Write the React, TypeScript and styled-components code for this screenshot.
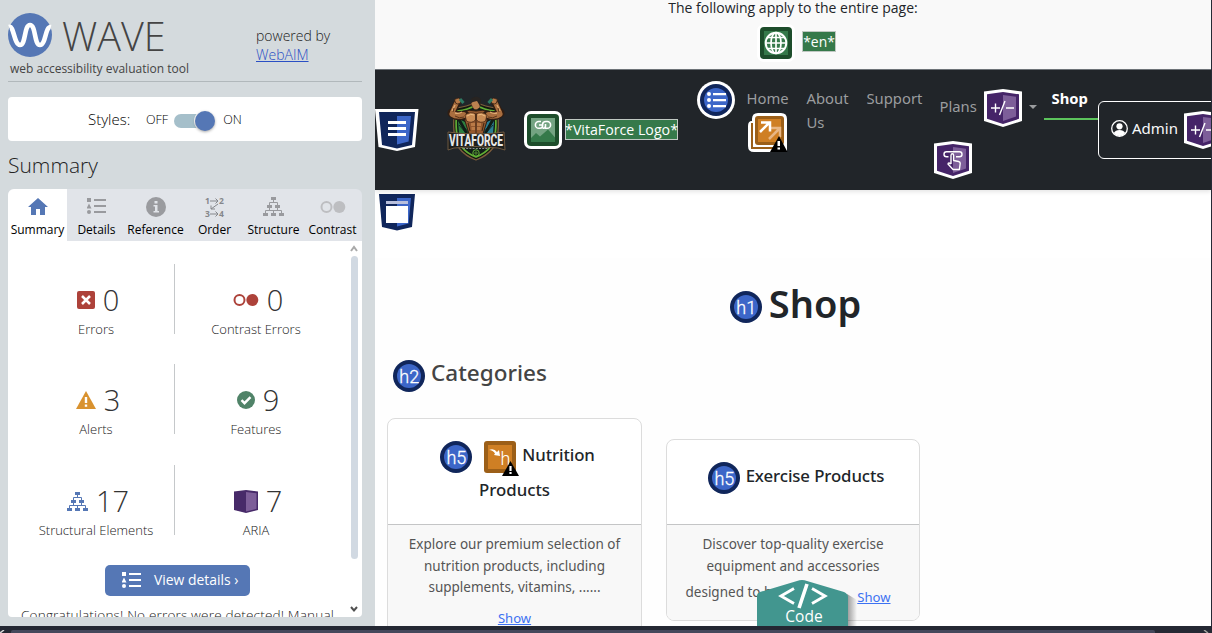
import React from 'react';
import styled, { createGlobalStyle } from 'styled-components';

const Global = createGlobalStyle`
  * { box-sizing: border-box; }
  html, body { margin: 0; padding: 0; overflow: hidden; background: #fff; }
  body { font-family: "Open Sans", "Noto Sans", sans-serif; }
  svg { display: block; flex: none; }
  h1, h2, h5, p { margin: 0; }
`;

const Shell = styled.div`
  width: 1212px; height: 633px; overflow: hidden;
  display: flex; flex-direction: column;
`;
const Workspace = styled.div`display: flex; height: 626px; overflow: hidden;`;
const BottomEdge = styled.div`
  height: 7px; background: #262833; border-top: 4px solid #242833;
  display: flex; align-items: stretch;
`;
const BottomThumb = styled.div`width: 1144px; margin: 0 48px 0 6px; background: #45485b; border-radius: 2px 2px 0 0;`;

/* ---------- sidebar ---------- */
const Sidebar = styled.aside`
  width: 375px; height: 626px; padding: 0 13px 9px 8px; background: #d4dadd; flex: none;
  display: flex; flex-direction: column;
`;
const Brand = styled.header`
  display: flex; justify-content: space-between; height: 82px; border-bottom: 1px solid #b1b8bb; flex: none;
`;
const BrandLeft = styled.div`padding-top: 13px;`;
const BrandRow = styled.div`display: flex; height: 45px; gap: 10px;`;
const Wordmark = styled.div`
  font-weight: 300; font-size: 39.5px; line-height: 46px; color: #444;
`;
const Tagline = styled.div`
  font-size: 12px; line-height: 16px; padding: 3px 0 0 2px; color: #444; white-space: nowrap;
`;
const Powered = styled.div`
  width: 106px; padding-top: 26px; font-size: 14px; line-height: 19px; font-weight: 300; color: #222;
  a { color: #2a4fc4; text-decoration: underline; }
`;
const StylesBox = styled.div`
  margin-top: 15px; height: 44px; background: #fff; border-radius: 4px; flex: none;
  display: flex; align-items: center; padding-left: 80px; font-size: 15px; color: #111;
`;
const StylesLabel = styled.span`width: 58px; font-weight: 300; color: #000;`;
const SwitchText = styled.span`font-size: 12.5px; font-weight: 300; color: #000;`;
const Toggle = styled.span`
  display: flex; justify-content: flex-end; align-items: center; margin: 4px 8px 0 6px;
  width: 41px; height: 14px; border-radius: 7px; background: #a5bfca;
`;
const Knob = styled.span`
  width: 20px; height: 20px; border-radius: 50%; background: #5577b5; box-shadow: 0 1px 3px rgba(0,0,0,.35), 0 0 0 1px #fff; flex: none;
`;
const SideTitle = styled.h2`
  font-weight: 300; font-size: 21px; line-height: 28px; margin-top: 10px; color: #222;
`;
const Tabs = styled.nav`
  margin-top: 10px; height: 52px; display: flex; background: #e1e4e9; border-radius: 6px 6px 0 0; overflow: hidden; flex: none;
`;
const Tab = styled.div<{ $on?: boolean }>`
  width: 59px; height: 52px; display: flex; flex-direction: column; align-items: center;
  background: ${p => (p.$on ? '#fff' : 'transparent')};
  font-size: 12px; line-height: 16px; color: #000; white-space: nowrap;
`;
const TabIcon = styled.span`height: 33px; display: flex; align-items: center; padding-top: 2px; flex: none;`;
const Panel = styled.section`
  flex: 1; background: #fff; border-radius: 0 0 4px 4px; display: flex; overflow: hidden; min-height: 0;
`;
const PanelBody = styled.div`width: 340px; overflow: hidden; padding-top: 23px; display: flex; flex-direction: column;`;
const StatRow = styled.div<{ $h: number }>`display: flex; height: ${p => p.$h}px; flex: none;`;
const Stat = styled.div<{ $w: number; $line?: boolean }>`
  width: ${p => p.$w}px; height: 70px; padding-left: ${p => (p.$line ? 10 : 0)}px;
  border-right: ${p => (p.$line ? '1px solid #c5c8ca' : '0')};
  display: flex; flex-direction: column; align-items: center;
`;
const StatTop = styled.div`display: flex; align-items: center; gap: 8px; height: 57px; padding: 15px 0 0 4px; flex: none;`;
const Num = styled.span`font-size: 29px; line-height: 36px; font-weight: 300; color: #333;`;
const StatLabel = styled.div`font-size: 13px; line-height: 17px; font-weight: 300; color: #222; white-space: nowrap;`;
const ViewDetails = styled.div`
  margin: 0 0 0 97px; width: 145px; height: 31px; background: #5577b5; border-radius: 5px; color: #fff; flex: none;
  display: flex; align-items: center; gap: 13px; padding-left: 17px; font-size: 13.9px; line-height: 18px; white-space: nowrap;
  span { padding-bottom: 2px; }
`;
const Congrats = styled.p`
  margin: 9px 0 0 13px; font-size: 13.6px; line-height: 20px; font-weight: 300; color: #222; white-space: nowrap; letter-spacing: 0.15px;
`;
const Scroll = styled.div`
  width: 14px; display: flex; flex-direction: column; align-items: center; padding: 4px 2px 4px 0;
`;
const Thumb = styled.div`width: 7px; height: 303px; border-radius: 4px; background: #d1d9e2; margin: 3px 0 46px; flex: none;`;

/* ---------- evaluated page ---------- */
const Page = styled.main`
  position: relative; flex: 1; min-width: 0; overflow: hidden; background: #fff; border-right: 1px solid #262a36;
  display: flex; flex-direction: column;
`;
const Notice = styled.div`
  height: 70px; background: #f9f9f9; border-bottom: 1px solid #70757a; flex: none;
  display: flex; flex-direction: column; align-items: center; color: #212529;
`;
const NoticeText = styled.div`font-size: 14px; line-height: 16px; white-space: nowrap;`;
const NoticeRow = styled.div`display: flex; align-items: flex-start; gap: 7px; margin-top: 8px; padding-left: 7px;`;
const AltText = styled.span<{ $size: number; $w: number; $top?: number }>`
  display: block; width: ${p => p.$w}px; height: 21px; margin-top: ${p => p.$top || 0}px; background: #35794a; border: 1px solid #c0c8c2; color: #fff;
  font-size: ${p => p.$size}px; line-height: 19px; display: flex; justify-content: center; white-space: nowrap;
`;
const Nav = styled.header`
  height: 120px; background: #212529; display: flex; flex: none; box-shadow: 0 2px 4px rgba(0,0,0,.1); overflow: hidden; z-index: 1;
`;
const NavItem = styled.div<{ $w: number; $top: number }>`
  width: ${p => p.$w}px; padding-top: ${p => p.$top}px; flex: none;
`;
const NavText = styled.span<{ $bold?: boolean }>`
  display: block; font-family: "Noto Sans", sans-serif; font-size: 14.8px; line-height: 24px; white-space: nowrap; padding-left: 0.5px;
  color: ${p => (p.$bold ? '#fff' : '#9b9d9f')}; font-weight: ${p => (p.$bold ? 700 : 400)};
`;
const UnderLink = styled.div`padding: 3px 0 0 2px;`;
const PlansRow = styled.div`display: flex; align-items: center; gap: 7px; height: 38px;`;
const PlansText = styled.div`padding: 0 0 4px 5px;`;
const PlansBelow = styled.div`padding-top: 14px;`;
const Caret = styled.span`
  border: 4px solid transparent; border-top-color: #9b9d9f; border-bottom: 0; margin-bottom: 3px;
`;
const ShopLink = styled.div`height: 34px; border-bottom: 2px solid #5cc45c; padding-left: 7px;`;
const AdminBox = styled.div`
  margin-top: 31px; height: 58px; width: 130px; flex: none; border: 1px solid #fff; border-radius: 6px;
  display: flex; align-items: center; padding: 0 0 3px 12px; gap: 4px;
  color: #f8f9fa; font: 15px "Noto Sans", sans-serif;
`;
const AdminName = styled.span`padding-bottom: 1px; margin-right: 2px;`;
const AdminMark = styled.div`padding-top: 3px;`;
const RegionMark = styled.div`height: 68px; padding: 1px 0 0 0; flex: none; background: #fff;`;
const Content = styled.div`height: 368px; background: #fefefe; flex: none; padding: 0 12px;`;
const ShopTitle = styled.h1`
  display: flex; align-items: center; justify-content: center; gap: 7px; height: 94px; padding: 4px 0 0 5px;
  font: 600 38px/46px "Noto Sans", sans-serif; color: #212529;
  span { padding-bottom: 8px; }
`;
const CatTitle = styled.h2`
  display: flex; align-items: center; gap: 6px; height: 46px; padding: 2px 0 0 6px;
  font: 500 22.5px/30px "Noto Sans", sans-serif; color: #444;
  span { padding-bottom: 6px; }
`;
const Cards = styled.div`display: flex; align-items: flex-start; gap: 24px; padding-top: 20px;`;
const Card = styled.article<{ $w: number; $h: number; $top: number }>`
  width: ${p => p.$w}px; height: ${p => p.$h}px; margin-top: ${p => p.$top}px; background: #fff; border: 1px solid #dcdcdc; border-radius: 8px;
  display: flex; flex-direction: column; overflow: hidden; flex: none;
`;
const CardHead = styled.div<{ $h: number }>`
  height: ${p => p.$h}px; flex: none; border-bottom: 1px solid #c4c5c6; padding-top: 20px;
  display: flex; flex-direction: column; align-items: center;
`;
const CardTitle = styled.h5`
  display: flex; align-items: center; gap: 6px; height: 36px; padding-left: 6px;
  font: 500 16.8px/30px "Noto Sans", sans-serif; letter-spacing: -0.1px; color: #212529; white-space: nowrap;
  span { padding-bottom: 5px; }
`;
const CardMarks = styled.div`display: flex; gap: 12px;`;
const CardTitleRest = styled.h5`font: 500 16.8px/30px "Noto Sans", sans-serif; color: #212529;`;
const CardText = styled.div`
  background: #f8f8f8; flex: 1; display: flex; flex-direction: column; align-items: center; padding-top: 9px;
  font: 13.5px/21.5px "Noto Sans", sans-serif; color: #555; white-space: nowrap;
`;
const TextLine = styled.span`display: block;`;
const ShowLink = styled.a<{ $top: number }>`
  color: #3d72f2; text-decoration: underline; font-size: 13.1px; padding-top: ${p => p.$top}px;
`;
const LastLine = styled.div`display: flex; align-items: flex-start; width: 205px; justify-content: space-between; margin: 5px 10px 0 0;`;
const CodeTab = styled.div`position: absolute; left: 382px; top: 580px; width: 110px; height: 46px; z-index: 3;`;
const CodeLabel = styled.div`
  position: absolute; left: 1px; top: 26px; width: 92px; text-align: center; color: #fff; font-size: 15.5px; line-height: 20px;
`;

/* ---------- drawings ---------- */
const WaveLogo = () => (
  <svg width="44" height="44" viewBox="0 0 44 44">
    <circle cx="22" cy="22" r="22" fill="#5577b5" />
    <path d="M1 14C6 12 6 32 12 32C18 32 16 12 22 12C28 12 26 32 32 32C38 32 37 13 43 14" fill="none" stroke="#fff" strokeWidth="4.600" />
  </svg>
);
const ListIcon = ({ c }: { c: string }) => (
  <svg width="19" height="17" viewBox="0 0 19 17" fill={c}>
    <path d="M0 0h4v4H0zM2 5.500l2.500 5H-.5zM7 1h12v2H7zM7 7h12v2H7zM7 13h12v2H7z" />
    <circle cx="2" cy="14" r="2" />
  </svg>
);
const Tree = ({ c }: { c: string }) => (
  <svg width="21" height="19" viewBox="0 0 21 19" fill={c}>
    <path d="M8 0h5v3H8zM4 8h5v3H4zM12 8h5v3h-5zM0 16h5v3H0zM8 16h5v3H8zM16 16h5v3h-5z" />
    <path d="M10.500 3v3M6.500 9V5.500h8V9M6.500 11v3M14.500 11v3M2.500 17v-3.500h16V17M10.500 14v3" stroke={c} fill="none" />
  </svg>
);
const Pair = ({ c }: { c: string }) => (
  <svg width="26" height="14" viewBox="0 0 26 14">
    <circle cx="6.500" cy="7" r="5" fill="none" stroke={c} strokeWidth="2" />
    <circle cx="19.300" cy="7" r="6" fill={c} />
  </svg>
);
const House = () => (
  <svg width="20" height="18" viewBox="0 0 20 18"><path d="M10 0L20 9H17V17H12V11H8V17H3V9H0Z" fill="#5577b5" /></svg>
);
const Info = () => (
  <svg width="20" height="20" viewBox="0 0 20 20">
    <circle cx="10" cy="10" r="10" fill="#9a9b9f" />
    <path d="M8.500 4h3v2.600h-3zM7.500 8h4v6h1.500v1.600H7.500V14H9V9.500H7.500z" fill="#e1e4e9" />
  </svg>
);
const OrderIcon = () => (
  <svg width="22" height="24" viewBox="-1 -2 22 24" fill="#85878b" fontFamily="Open Sans, sans-serif" fontSize="8.500" fontWeight="700">
    <text x="0" y="7">1</text><text x="14" y="7">2</text><text x="0" y="20">3</text><text x="14" y="20">4</text>
    <path d="M5 4h8M10.500 1.500L13 4l-2.500 2.500M5 17h8M10.500 14.500L13 17l-2.500 2.500M13 7L6 12M6 8.500V12h4" fill="none" stroke="#85878b" />
  </svg>
);
const ErrorIcon = () => (
  <svg width="18" height="18" viewBox="0 0 18 18"><rect width="18" height="18" rx="2" fill="#ad423a" /><path d="M5 5l8 8M13 5l-8 8" stroke="#fff" strokeWidth="2.500" /></svg>
);
const AlertIcon = () => (
  <svg width="20" height="18" viewBox="0 0 20 18"><path d="M10 0l10 18H0z" fill="#d9922f" /><path d="M8.800 6h2.400v6H8.800zM8.800 13.500h2.400v2.200H8.800z" fill="#fff" /></svg>
);
const CheckIcon = () => (
  <svg width="18" height="18" viewBox="0 0 18 18"><circle cx="9" cy="9" r="9" fill="#508368" /><path d="M4.500 9.200l3 3 6-6" fill="none" stroke="#fff" strokeWidth="2.400" /></svg>
);
const AriaIcon = () => (
  <svg width="24" height="23" viewBox="0 0 24 23"><path d="M0 1.500L12 0l12 1.500V20l-12 3L0 20z" fill="#472a69" /><path d="M12 2l10.500 1.200V18.800L12 21.400z" fill="#7d5e99" /></svg>
);
const Chevron = ({ up }: { up?: boolean }) => (
  <svg width="8" height="8" viewBox="0 0 8 8"><path d={up ? 'M1 6l3-4 3 4' : 'M1 2l3 3.500L7 2'} fill="none" stroke={up ? '#a9a9a9' : '#505050'} strokeWidth="2" /></svg>
);
const Heading = ({ n }: { n: number }) => (
  <svg width="32" height="32" viewBox="0 0 32 32">
    <circle cx="16" cy="16" r="16" fill="#10265b" /><circle cx="16" cy="16" r="12" fill="#3c66c8" />
    <text x="16.300" y="23" textAnchor="middle" fontFamily="Roboto, sans-serif" fontSize="18" fontWeight="300" fill="#fff" stroke="#fff" strokeWidth=".3">{`h${n}`}</text>
  </svg>
);
const Globe = () => (
  <svg width="38" height="38" viewBox="0 0 38 38">
    <rect width="38" height="38" rx="7" fill="#fff" /><rect x="3" y="3" width="32" height="32" rx="4" fill="#1d4d2b" /><rect x="7" y="7" width="24" height="24" fill="#35794a" />
    <g fill="none" stroke="#fff" strokeWidth="1.700"><circle cx="19" cy="19" r="10.300" strokeWidth="2" /><ellipse cx="19" cy="19" rx="5" ry="10.300" /><path d="M19 9v20M9 19h20M11 13.500h16M11 24.500h16" /></g>
  </svg>
);
const ImageIcon = () => (
  <svg width="38" height="38" viewBox="0 0 38 38">
    <rect width="38" height="38" rx="7" fill="#fff" /><rect x="3" y="3" width="32" height="32" rx="4" fill="#1d4d2b" /><rect x="7" y="7" width="24" height="24" fill="#74a382" />
    <path d="M7 27l5-5 4 3.500 8-7 7 8V31H7z" fill="#35794a" />
    <path d="M17 10.500h-2.200a3.300 3.300 0 0 0 0 6.800H16q2.600 0 2.600-2.500v-1.500M21 17.300h2.200a3.300 3.300 0 0 0 0-6.800H22q-3.400 0-3.400 2.800M15 14q0 0 3.600 0M21.500 13v2q0 2.300-2.900 2.300" fill="none" stroke="#fff" strokeWidth="1.600" />
  </svg>
);
const Landmark = ({ nav }: { nav?: boolean }) => (
  <svg width="44" height="42" viewBox="0 0 44 42">
    <path d="M0 0h43.500l-3.500 38L22 42L3.500 38z" fill="#fff" />
    <path d="M4 3h36l-3 33-15 3.500L7 36z" fill="#10265b" /><path d="M22 7h14l-2.400 25.500L22 35.500z" fill="#3c66c8" />
    {nav ? <path d="M13 12h18v3H13zM13 18h18v3H13zM13 24h18v3H13z" fill="#fff" /> : <><path d="M11 10h22v3H11z" fill="#b8bfdc" /><path d="M11 15h22v17H11z" fill="#fff" /></>}
  </svg>
);
const ListMark = () => (
  <svg width="38" height="38" viewBox="0 0 38 38">
    <circle cx="19" cy="19" r="19" fill="#fff" /><circle cx="19" cy="19" r="16" fill="#10265b" /><circle cx="19" cy="19" r="12" fill="#3c66c8" />
    <g fill="#fff"><circle cx="12" cy="13" r="2" /><circle cx="12" cy="19" r="2" /><circle cx="12" cy="25" r="2" /><path d="M16 12h13v2.200H16zM16 18h13v2.200H16zM16 24h13v2.200H16z" /></g>
  </svg>
);
const Redundant = () => (
  <svg width="40" height="40" viewBox="0 0 40 40">
    <path d="M10 0h23q6 0 6 6v33H6q-6 0-6-6V13q0-5 4-5V6q0-6 6-6z" fill="#fff" />
    <path d="M4 10v25h24" fill="none" stroke="#9c5f18" strokeWidth="2" />
    <rect x="7" y="3" width="29" height="29" rx="3" fill="#9c5f18" /><rect x="10" y="6" width="23" height="23" fill="#cf7f24" />
    <path d="M21 26l11-11M23 15h9v9" stroke="#e8b684" strokeWidth="2.500" fill="none" />
    <path d="M12 19l10-10M13 9.500h9v9" stroke="#fff" strokeWidth="2.500" fill="none" />
    <path d="M31 23l8.500 16H22z" fill="#000" /><path d="M29.500 28h2.500v5h-2.500zM29.500 34.500h2.500v2h-2.500z" fill="#fff" />
  </svg>
);
const SkippedHeading = () => (
  <svg width="32" height="32" viewBox="0 0 32 32" overflow="visible">
    <rect width="32" height="32" rx="3" fill="#9c5f18" /><rect x="4" y="4" width="24" height="24" fill="#cf7f24" />
    <path d="M5 9q5-2 8 2l2-2 1 6-6-1 1-1.500Q9 9 5 9z" fill="#fff" />
    <text x="16.500" y="23.500" fontFamily="Roboto, sans-serif" fontSize="18" fontWeight="300" fill="#fff">h</text>
    <path d="M26.500 20L35 35H18z" fill="#000" /><path d="M25.400 25h2.200v5h-2.200zM25.400 31h2.200v2h-2.200z" fill="#fff" />
  </svg>
);
const AriaMark = ({ tab }: { tab?: boolean }) => (
  <svg width="38" height="38" viewBox="0 0 38 38">
    <path d="M0 2.500L19 0l19 2.500V32L19 38L0 32z" fill="#fff" /><path d="M3 5.300L19 3l16 2.300v24.500L19 35L3 29.800z" fill="#452468" /><path d="M19 6l13 1.700v19.800L19 32z" fill="#7d5e99" />
    {tab
      ? <g fill="none" stroke="#fff" strokeWidth="1.400" strokeLinejoin="round"><path d="M14.500 15.800h-2a2.500 2.500 0 0 1 0-5h13a2.500 2.500 0 0 1 0 5H22" /><path d="M17 23V14.500q0-1.700 1.300-1.700t1.300 1.700V19.500l5 1q1.800.4 1.600 2l-.8 6h-6.400l-5-5.500q.2-2 3 0" /></g>
      : <path d="M7 19h9M11.500 14.500v9M21 12l-5.500 14M22 19h8" fill="none" stroke="#fff" strokeWidth="1.400" />}
  </svg>
);
const UserIcon = () => (
  <svg width="17" height="17" viewBox="0 0 17 17"><circle cx="8.500" cy="8.500" r="7.800" fill="none" stroke="#fff" strokeWidth="1.300" /><circle cx="8.500" cy="6.300" r="3.100" fill="#fff" /><path d="M2.800 13q1.700-3 5.700-3t5.700 3q-2 3-5.700 3t-5.700-3z" fill="#fff" /></svg>
);
const Arm = () => (
  <g>
    <path d="M10 7L5 17" stroke="#2f1d12" strokeWidth="7" strokeLinecap="round" />
    <path d="M5 17q4 4 13 2" stroke="#2f1d12" strokeWidth="9" strokeLinecap="round" fill="none" />
    <path d="M9.500 7L5 17" stroke="#a96e3f" strokeWidth="4.600" strokeLinecap="round" />
    <path d="M5.500 18q4 3 11 1" stroke="#a96e3f" strokeWidth="6" strokeLinecap="round" fill="none" />
    <path d="M8 9L5 15M8 17q4 1 7-1" stroke="#e0ab72" strokeWidth="1.400" fill="none" />
    <path d="M8 20q4 3 9 1M7 12l-1 4" stroke="#5c351b" fill="none" />
    <path d="M7.500 3.500q4-3 7 0l-1 3.500q-3 2-5 0z" fill="#b87a48" stroke="#2f1d12" strokeWidth=".8" />
    <path d="M13 3l3.500 4" stroke="#2d7a63" strokeWidth="3" />
  </g>
);
const VitaLogo = () => (
  <svg width="60" height="67" viewBox="0 0 60 67">
    <path d="M8 12Q20 11 29 6q9 5 21 6 4 26-4 40-6 8-17 12Q18 60 12 52 4 38 8 12z" fill="#10180f" stroke="#7c5c3c" strokeWidth="1.300" />
    <path d="M10 15q11-1 19-6 8 5 19 6 3 23-4 35-5 7-15 11-10-4-15-11-7-12-4-35z" fill="#101d18" stroke="#62ae35" strokeWidth="1.700" />
    <path d="M11 25l7 12h-6zM14 24l7 13h3l-4-10z" fill="#2e8040" />
    <path d="M47 25l-7 12h6zM44 24l-7 13h-3l4-10z" fill="#2a7d92" />
    <path d="M12 29l7 8M13 26l9 11M46 29l-7 8M45 26l-9 11" stroke="#0d1c18" strokeWidth=".8" />
    <path d="M16 16q6-3 13-1 7-2 13 1l-2 9-4 13H22l-4-13z" fill="#94592f" stroke="#2f1d12" />
    <Arm />
    <g transform="translate(58 0) scale(-1 1)"><Arm /></g>
    <path d="M18 19q6-4 10.500-1v6q-4 4-9 1zM40 19q-6-4-10.500-1v6q4 4 9 1z" fill="#c88b55" stroke="#4b2a15" strokeWidth=".8" />
    <path d="M20 20q4-3 7-1M38 20q-4-3-7-1" stroke="#edbc82" fill="none" />
    <path d="M24 27h4v3h-4zM30 27h4v3h-4zM24.500 31h3.500v3h-3.500zM30 31h3.500v3H30z" fill="#ba7b47" />
    <path d="M29 17v20M21 27l2 8M37 27l-2 8" stroke="#3d2414" fill="none" />
    <path d="M25 4q4-3 8 0v7q-4 5-7 1l-2-4z" fill="#bb8150" stroke="#3c2416" strokeWidth=".6" />
    <path d="M24 7V3q4-4 9-1 2 2 0 8l-3-5-4 1z" fill="#282421" />
    <path d="M1 36q28 4 56 0l1 18-7-2q-22-3-44 0l-6 2z" fill="#1d1e1c" stroke="#806548" strokeWidth=".8" />
    <text x="29" y="50" textAnchor="middle" textLength="54" lengthAdjust="spacingAndGlyphs" fontFamily="Roboto, sans-serif" fontSize="16.500" fontWeight="800" fill="#e8e8e8">VITAFORCE</text>
    <path d="M16 52.500h26" stroke="#8c8c8c" strokeDasharray="2 1.200" />
    <circle cx="29" cy="57" r="3.200" fill="none" stroke="#62ae35" /><path d="M27 57h4M29 55v4" stroke="#62ae35" strokeWidth=".7" />
  </svg>
);

const tabs: [string, React.ReactNode][] = [
  ['Summary', <House />], ['Details', <ListIcon c="#999a9e" />], ['Reference', <Info />],
  ['Order', <OrderIcon />], ['Structure', <Tree c="#999a9e" />], ['Contrast', <Pair c="#bdbec1" />],
];
const stats: { h: number; items: [string, string, React.ReactNode][] }[] = [
  { h: 100, items: [['0', 'Errors', <ErrorIcon />], ['0', 'Contrast Errors', <Pair c="#ad423a" />]] },
  { h: 101, items: [['3', 'Alerts', <AlertIcon />], ['9', 'Features', <CheckIcon />]] },
  { h: 100, items: [['17', 'Structural Elements', <Tree c="#5577b5" />], ['7', 'ARIA', <AriaIcon />]] },
];

export default function App() {
  return (
    <Shell>
      <Global />
      <Workspace>
        <Sidebar>
          <Brand>
            <BrandLeft>
              <BrandRow><WaveLogo /><Wordmark>WAVE</Wordmark></BrandRow>
              <Tagline>web accessibility evaluation tool</Tagline>
            </BrandLeft>
            <Powered>powered by<br /><a>WebAIM</a></Powered>
          </Brand>
          <StylesBox>
            <StylesLabel>Styles:</StylesLabel><SwitchText>OFF</SwitchText><Toggle><Knob /></Toggle><SwitchText>ON</SwitchText>
          </StylesBox>
          <SideTitle>Summary</SideTitle>
          <Tabs>{tabs.map(([t, icon], i) => <Tab key={t} $on={i === 0}><TabIcon>{icon}</TabIcon>{t}</Tab>)}</Tabs>
          <Panel>
            <PanelBody>
              {stats.map((r, k) => (
                <StatRow key={k} $h={r.h}>
                  {r.items.map(([n, label, icon], i) => (
                    <Stat key={label} $w={i ? 162 : 167} $line={i === 0}>
                      <StatTop>{icon}<Num>{n}</Num></StatTop>
                      <StatLabel>{label}</StatLabel>
                    </Stat>
                  ))}
                </StatRow>
              ))}
              <ViewDetails><ListIcon c="#fff" /><span>View details ›</span></ViewDetails>
              <Congrats>Congratulations! No errors were detected! Manual</Congrats>
            </PanelBody>
            <Scroll><Chevron up /><Thumb /><Chevron /></Scroll>
          </Panel>
        </Sidebar>
        <Page>
          <Notice>
            <NoticeText>The following apply to the entire page:</NoticeText>
            <NoticeRow><Globe /><AltText $size={13.9} $w={34} $top={7}>*en*</AltText></NoticeRow>
          </Notice>
          <Nav>
            <NavItem $w={72} $top={39}><Landmark nav /></NavItem>
            <NavItem $w={77} $top={26}><VitaLogo /></NavItem>
            <NavItem $w={41} $top={41}><ImageIcon /></NavItem>
            <NavItem $w={132} $top={49}><AltText $size={14.2} $w={113}>*VitaForce Logo*</AltText></NavItem>
            <NavItem $w={49} $top={11}><ListMark /></NavItem>
            <NavItem $w={60} $top={16}><NavText>Home</NavText><UnderLink><Redundant /></UnderLink></NavItem>
            <NavItem $w={60} $top={16}><NavText>About</NavText><NavText>Us</NavText></NavItem>
            <NavItem $w={68} $top={16}><NavText>Support</NavText></NavItem>
            <NavItem $w={110} $top={19}>
              <PlansRow><PlansText><NavText>Plans</NavText></PlansText><AriaMark /><Caret /></PlansRow>
              <PlansBelow><AriaMark tab /></PlansBelow>
            </NavItem>
            <NavItem $w={54} $top={16}><ShopLink><NavText $bold>Shop</NavText></ShopLink></NavItem>
            <AdminBox><UserIcon /><AdminName>Admin</AdminName><AdminMark><AriaMark /></AdminMark></AdminBox>
          </Nav>
          <RegionMark><Landmark /></RegionMark>
          <Content>
            <ShopTitle><Heading n={1} /><span>Shop</span></ShopTitle>
            <CatTitle><Heading n={2} /><span>Categories</span></CatTitle>
            <Cards>
              <Card $w={255} $h={240} $top={0}>
                <CardHead $h={106}>
                  <CardTitle><CardMarks><Heading n={5} /><SkippedHeading /></CardMarks><span>Nutrition</span></CardTitle>
                  <CardTitleRest>Products</CardTitleRest>
                </CardHead>
                <CardText>
                  <TextLine>Explore our premium selection of</TextLine>
                  <TextLine>nutrition products, including</TextLine>
                  <TextLine>supplements, vitamins, ......</TextLine>
                  <ShowLink $top={9}>Show</ShowLink>
                </CardText>
              </Card>
              <Card $w={254} $h={182} $top={21}>
                <CardHead $h={85}><CardTitle><Heading n={5} /><span>Exercise Products</span></CardTitle></CardHead>
                <CardText>
                  <TextLine>Discover top-quality exercise</TextLine>
                  <TextLine>equipment and accessories</TextLine>
                  <LastLine><span>designed to b</span><ShowLink $top={5}>Show</ShowLink></LastLine>
                </CardText>
              </Card>
            </Cards>
          </Content>
          <CodeTab>
            <svg width="110" height="46" viewBox="0 0 110 46">
              <defs><linearGradient id="shade"><stop offset="0" stopColor="#000" stopOpacity=".4" /><stop offset="1" stopColor="#000" stopOpacity="0" /></linearGradient></defs>
              <path d="M90 14l10 6v26H90z" fill="url(#shade)" />
              <path d="M0 46V16q0-3 3-4L40 1q5-2 10 0l37 11q4 2 4 5v29z" fill="#42968f" />
              <path d="M37 8.500L24 16l13 7.500M55 8.500L68 16l-13 7.500" fill="none" stroke="#fff" strokeWidth="2.900" /><path d="M50 4l-8 24" stroke="#fff" strokeWidth="3.600" />
            </svg>
            <CodeLabel>Code</CodeLabel>
          </CodeTab>
        </Page>
      </Workspace>
      <BottomEdge>
        <svg width="5" height="3" viewBox="0 0 5 3"><path d="M0 3L4 0" stroke="#d6d6d6" strokeWidth="1.500" /></svg>
        <BottomThumb />
        <svg width="6" height="3" viewBox="0 0 6 3"><path d="M1 0l4 3" stroke="#a5a5a0" strokeWidth="1.500" /></svg>
      </BottomEdge>
    </Shell>
  );
}
